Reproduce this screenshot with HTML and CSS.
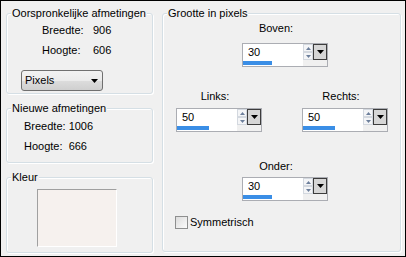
FILE: index.html
```html
<!DOCTYPE html>
<html lang="nl">
  <head>
    <meta charset="utf-8">
    <title>Afmetingen canvas</title>
    <link rel="stylesheet" href="styles.css">
  </head>
  <body>
    <div class="dialog">
      <!-- Linker kolom -->
      <div class="col-left">
        <section class="group group-orig">
          <div class="group-title">Oorspronkelijke afmetingen</div>
          <div class="dims">
            <span>Breedte:</span><span>906</span>
            <span>Hoogte:</span><span>606</span>
          </div>
          <div class="combo">
            <span>Pixels</span>
            <svg width="7" height="4" viewBox="0 0 7 4"><polygon points="0,0 7,0 3.5,4" fill="#000"/></svg>
          </div>
        </section>

        <section class="group group-new">
          <div class="group-title">Nieuwe afmetingen</div>
          <div class="new-rows">
            <div>Breedte: 1006</div>
            <div>Hoogte:&nbsp; 666</div>
          </div>
        </section>

        <section class="group group-color">
          <div class="group-title">Kleur</div>
          <div class="swatch"></div>
        </section>
      </div>

      <!-- Grootte in pixels -->
      <section class="group group-size">
        <div class="group-title">Grootte in pixels</div>

        <div class="spin-block spin-block--top">
          <div class="spin-label">Boven:</div>
          <div class="spin">
            <div class="spin-main">
              <div class="spin-value">30</div>
              <div class="spin-track"><div class="spin-fill" style="width: 29px"></div></div>
            </div>
            <div class="spin-arrows">
              <span class="arrow"><svg width="5" height="3" viewBox="0 0 5 3"><polygon points="0,3 5,3 2.5,0" fill="#6c7f9b"/></svg></span>
              <span class="arrow"><svg width="5" height="3" viewBox="0 0 5 3"><polygon points="0,0 5,0 2.5,3" fill="#6c7f9b"/></svg></span>
            </div>
            <div class="spin-drop"><svg width="7" height="4" viewBox="0 0 7 4"><polygon points="0,0 7,0 3.5,4" fill="#000"/></svg></div>
          </div>
        </div>

        <div class="side-row">
          <div class="spin-block">
            <div class="spin-label spin-label--side">Links:</div>
            <div class="spin">
              <div class="spin-main">
                <div class="spin-value">50</div>
                <div class="spin-track"><div class="spin-fill" style="width: 32px"></div></div>
              </div>
              <div class="spin-arrows">
                <span class="arrow"><svg width="5" height="3" viewBox="0 0 5 3"><polygon points="0,3 5,3 2.5,0" fill="#6c7f9b"/></svg></span>
                <span class="arrow"><svg width="5" height="3" viewBox="0 0 5 3"><polygon points="0,0 5,0 2.5,3" fill="#6c7f9b"/></svg></span>
              </div>
              <div class="spin-drop"><svg width="7" height="4" viewBox="0 0 7 4"><polygon points="0,0 7,0 3.5,4" fill="#000"/></svg></div>
            </div>
          </div>
          <div class="spin-block">
            <div class="spin-label spin-label--side">Rechts:</div>
            <div class="spin">
              <div class="spin-main">
                <div class="spin-value">50</div>
                <div class="spin-track"><div class="spin-fill" style="width: 32px"></div></div>
              </div>
              <div class="spin-arrows">
                <span class="arrow"><svg width="5" height="3" viewBox="0 0 5 3"><polygon points="0,3 5,3 2.5,0" fill="#6c7f9b"/></svg></span>
                <span class="arrow"><svg width="5" height="3" viewBox="0 0 5 3"><polygon points="0,0 5,0 2.5,3" fill="#6c7f9b"/></svg></span>
              </div>
              <div class="spin-drop"><svg width="7" height="4" viewBox="0 0 7 4"><polygon points="0,0 7,0 3.5,4" fill="#000"/></svg></div>
            </div>
          </div>
        </div>

        <div class="spin-block spin-block--bottom">
          <div class="spin-label">Onder:</div>
          <div class="spin">
            <div class="spin-main">
              <div class="spin-value">30</div>
              <div class="spin-track"><div class="spin-fill" style="width: 29px"></div></div>
            </div>
            <div class="spin-arrows">
              <span class="arrow"><svg width="5" height="3" viewBox="0 0 5 3"><polygon points="0,3 5,3 2.5,0" fill="#6c7f9b"/></svg></span>
              <span class="arrow"><svg width="5" height="3" viewBox="0 0 5 3"><polygon points="0,0 5,0 2.5,3" fill="#6c7f9b"/></svg></span>
            </div>
            <div class="spin-drop"><svg width="7" height="4" viewBox="0 0 7 4"><polygon points="0,0 7,0 3.5,4" fill="#000"/></svg></div>
          </div>
        </div>

        <div class="check">
          <span class="check-box"></span>
          <span>Symmetrisch</span>
        </div>
      </section>
    </div>
  </body>
</html>
```

FILE: styles.css
```css
/* Algemeen */
* {
  box-sizing: border-box;
}

body {
  margin: 0;
  font-family: "Liberation Sans", Arial, sans-serif;
  font-size: 11px;
  line-height: 13px;
  color: #000;
}

.dialog {
  width: 406px;
  height: 257px;
  border: 1px solid #000;
  background: #f0f0f0;
  display: flex;
  gap: 9px;
  padding: 12px 4px 0 5px;
}

/* Groepsvakken */
.col-left {
  width: 147px;
  display: flex;
  flex-direction: column;
  gap: 14px;
}

.group {
  border: 1px solid #d5dfe5;
  border-radius: 3px;
  box-shadow: inset 1px 1px 0 #fff, 1px 1px 0 #fff;
  display: flex;
  flex-direction: column;
}

.group-title {
  align-self: flex-start;
  margin: -7px 0 0 4px;
  padding: 0 1px;
  background: #f0f0f0;
}

.group-orig {
  height: 81px;
}

.dims {
  display: grid;
  grid-template-columns: 51px auto;
  row-gap: 7px;
  margin: 4px 0 0 35px;
}

.combo {
  width: 82px;
  height: 21px;
  margin: 13px 0 0 14px;
  padding: 0 4px 0 3px;
  display: flex;
  align-items: center;
  justify-content: space-between;
  border: 1px solid #707070;
  border-radius: 3px;
  background: linear-gradient(#f2f2f2, #ebebeb 50%, #dddddd 50%, #cfcfcf);
}

.group-new {
  height: 55px;
}

.new-rows {
  display: flex;
  flex-direction: column;
  gap: 7px;
  margin: 5px 0 0 17px;
}

.group-color {
  height: 76px;
}

.swatch {
  width: 80px;
  height: 58px;
  margin: 5px 0 0 30px;
  border: 1px solid;
  border-color: #a0a0a0 #fff #fff #a0a0a0;
  background: #f6f1ee;
}

/* Grootte in pixels */
.group-size {
  width: 239px;
  height: 239px;
}

.spin-block {
  display: flex;
  flex-direction: column;
  width: 86px;
}

.spin-label {
  text-align: center;
  padding-right: 18px;
  margin-bottom: 5px;
}

.spin-label--side {
  padding-right: 8px;
}

.spin-block--top {
  align-self: center;
  margin: 2px 0 0 7px;
}

.spin-block--top .spin-label {
  margin-bottom: 8px;
}

.spin-block--bottom {
  align-self: center;
  margin: 28px 0 0 7px;
}

.spin-block--bottom .spin-label {
  margin-bottom: 4px;
}

.side-row {
  display: flex;
  justify-content: space-between;
  margin-top: 23px;
  padding: 0 12px 0 13px;
}

.spin {
  width: 86px;
  height: 24px;
  display: flex;
  align-items: flex-start;
  border: 1px solid #abadb3;
  background: #f0f0f0;
}

.spin-main {
  width: 60px;
  height: 100%;
  display: flex;
  flex-direction: column;
  background: #fff;
}

.spin-value {
  flex: 1;
  padding: 2px 0 0 5px;
}

.spin-track {
  height: 4px;
  margin-bottom: 1px;
  background: #fff;
}

.spin-fill {
  height: 100%;
  background: #3a8ee6;
}

.spin-arrows {
  width: 10px;
  height: 16px;
  display: flex;
  flex-direction: column;
}

.arrow {
  flex: 1;
  display: flex;
  align-items: center;
  justify-content: center;
  border: 1px solid #d3d8df;
  background: #f4f5f7;
}

.spin-drop {
  width: 14px;
  height: 16px;
  display: flex;
  align-items: center;
  justify-content: center;
  border: 1px solid #3c3c3c;
  background: #d6d6d6;
}

.check {
  display: flex;
  align-items: center;
  gap: 2px;
  margin: 15px 0 0 12px;
}

.check-box {
  width: 13px;
  height: 13px;
  border: 1px solid #8e8f8f;
  background: linear-gradient(135deg, #dcdcdc, #fbfbfb);
}
```
